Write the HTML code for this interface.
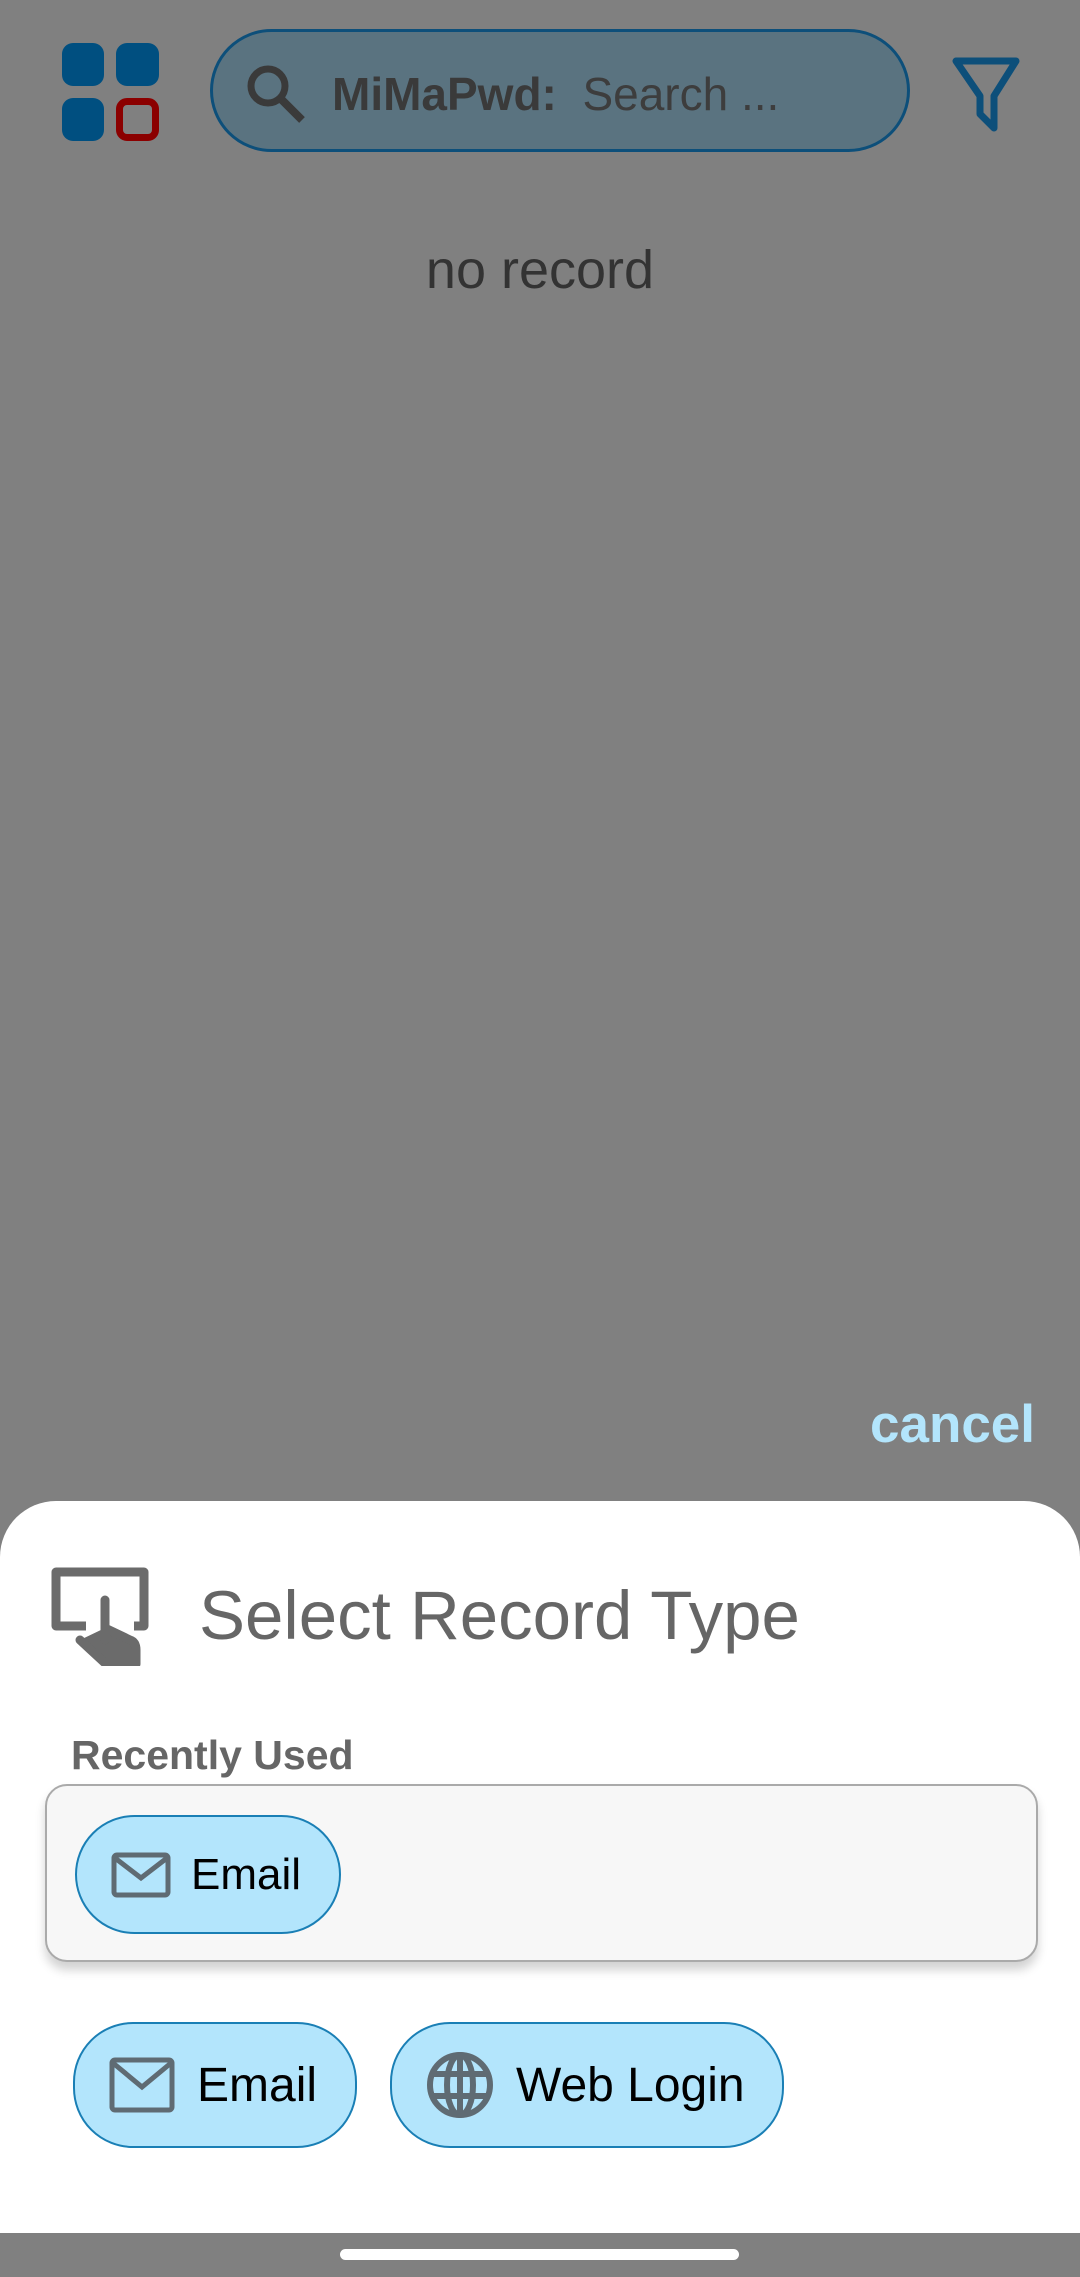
<!DOCTYPE html>
<html><head><meta charset="utf-8"><style>
*{margin:0;padding:0;box-sizing:border-box}
body{width:1080px;height:2277px;background:#808080;position:relative;overflow:hidden;font-family:"Liberation Sans",sans-serif}
.a{position:absolute}
.chip{position:absolute;background:#b3e5fc;border:2px solid #1a7fb5;border-radius:60px;display:flex;align-items:center;color:#000}
</style></head><body>
<div class="a" style="left:62px;top:43px;width:42px;height:43px;background:#004f80;border-radius:11px"></div>
<div class="a" style="left:116px;top:43px;width:43px;height:43px;background:#004f80;border-radius:11px"></div>
<div class="a" style="left:62px;top:98px;width:42px;height:43px;background:#004f80;border-radius:11px"></div>
<div class="a" style="left:116px;top:98px;width:43px;height:43px;border:7px solid #8b0000;border-radius:11px"></div>
<div class="a" style="left:210px;top:29px;width:700px;height:123px;background:#5a7380;border:3px solid #0d4f7a;border-radius:62px"></div>
<svg class="a" style="left:244px;top:62px" width="64" height="64" viewBox="0 0 64 64"><circle cx="24" cy="24" r="17" fill="none" stroke="#3a3a3a" stroke-width="7"/><line x1="36" y1="36" x2="58" y2="58" stroke="#3a3a3a" stroke-width="8"/></svg>
<div class="a" style="left:332px;top:64px;font-size:46px;color:#3a3a3a;line-height:60px"><b>MiMaPwd:</b>&nbsp; <span style="color:#3d3d3d">Search ...</span></div>
<svg class="a" style="left:952px;top:56px" width="68" height="76" viewBox="0 0 68 76"><path d="M4 5 H64 L42 40 V72 L28 58 V40 Z" fill="none" stroke="#0d4f7a" stroke-width="7" stroke-linejoin="round"/></svg>
<div class="a" style="left:0;width:1080px;top:238px;text-align:center;font-size:54px;color:#333;line-height:64px">no record</div>
<div class="a" style="left:870px;top:1395px;font-size:53px;font-weight:bold;color:#b3e5fc;line-height:60px">cancel</div>
<div class="a" style="left:0;top:1501px;width:1080px;height:732px;background:#fff;border-radius:56px 56px 0 0"></div>
<svg class="a" style="left:50px;top:1566px" width="100" height="100" viewBox="0 0 100 100"><path d="M36 60 H6 V6 H94 V60 H84" fill="none" stroke="#6b6b6b" stroke-width="9" stroke-linejoin="round"/><path d="M55 34 V74 M55 62 L80 74 Q86 76 86 84 V98 H56 L30 74" fill="#6b6b6b" stroke="#6b6b6b" stroke-width="9" stroke-linecap="round" stroke-linejoin="round"/></svg>
<div class="a" style="left:199px;top:1576px;font-size:69px;color:#666;line-height:80px">Select Record Type</div>
<div class="a" style="left:71px;top:1730px;font-size:41px;font-weight:bold;color:#666;line-height:50px">Recently Used</div>
<div class="a" style="left:45px;top:1784px;width:993px;height:178px;background:#f7f7f7;border:2px solid #aaa;border-radius:22px;box-shadow:0 8px 10px rgba(0,0,0,0.18)"></div>
<div class="chip" style="left:75px;top:1815px;width:266px;height:119px;font-size:44px">
<svg style="margin-left:34px;margin-right:20px" width="60" height="46" viewBox="0 0 60 46"><rect x="3" y="3" width="54" height="40" rx="3" fill="none" stroke="#5f6b73" stroke-width="5"/><path d="M4 6 L30 26 L56 6" fill="none" stroke="#5f6b73" stroke-width="5"/></svg>Email</div>
<div class="chip" style="left:73px;top:2022px;width:284px;height:126px;font-size:48px">
<svg style="margin-left:34px;margin-right:22px" width="66" height="56" viewBox="0 0 66 56"><rect x="3" y="3" width="60" height="50" rx="3" fill="none" stroke="#5f6b73" stroke-width="5"/><path d="M4 6 L33 30 L62 6" fill="none" stroke="#5f6b73" stroke-width="5"/></svg>Email</div>
<div class="chip" style="left:390px;top:2022px;width:394px;height:126px;font-size:48px">
<svg style="margin-left:34px;margin-right:22px" width="68" height="68" viewBox="0 0 68 68"><g fill="none" stroke="#5f6b73" stroke-width="6"><circle cx="34" cy="34" r="30"/><ellipse cx="34" cy="34" rx="13" ry="30"/><line x1="34" y1="4" x2="34" y2="64"/><line x1="6" y1="23" x2="62" y2="23"/><line x1="6" y1="45" x2="62" y2="45"/></g></svg>Web Login</div>
<div class="a" style="left:340px;top:2249px;width:399px;height:11px;background:#fff;border-radius:6px"></div>
</body></html>
